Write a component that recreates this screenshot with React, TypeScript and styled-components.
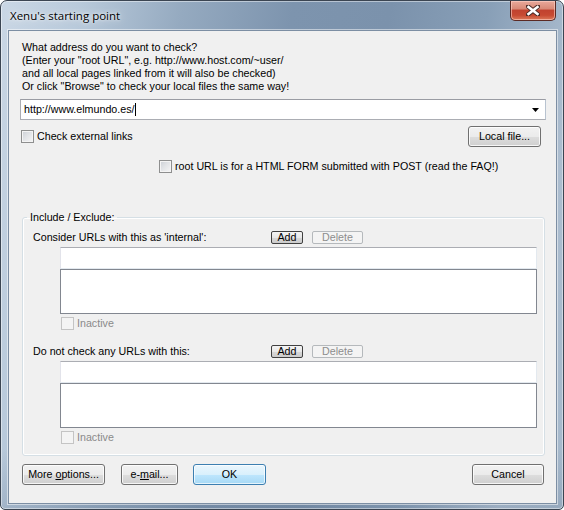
import styled, { createGlobalStyle } from 'styled-components'

const GlobalStyle = createGlobalStyle`
  html, body {
    margin: 0;
    padding: 0;
    background: #ffffff;
  }
  body {
    font-family: "Liberation Sans", Arial, sans-serif;
    font-size: 10.7px;
    color: #000;
  }
`

const Window = styled.div`
  width: 564px;
  height: 510px;
  box-sizing: border-box;
  border: 1px solid #3b4552;
  border-radius: 7px 7px 5px 5px;
  padding: 0 6px 5px 7px;
  display: flex;
  flex-direction: column;
  background:
    linear-gradient(180deg, rgba(255,255,255,0) 0%, rgba(255,255,255,0) 88%, rgba(60,80,110,0.15) 100%),
    linear-gradient(100deg, #cad7e5 0%, #b9cadb 12%, #95aac0 28%, #7d94ae 45%, #7b92ac 60%, #889fb7 75%, #acbdcf 90%, #a5b8cb 100%);
  box-shadow: inset 0 0 0 1px rgba(255,255,255,0.45);
`

const TitleBar = styled.div`
  height: 29px;
  display: flex;
  align-items: flex-start;
  padding-left: 2px;
`

const Title = styled.div`
  font-family: "Open Sans", "Noto Sans", sans-serif;
  font-size: 11.5px;
  line-height: 16px;
  margin-top: 7px;
  color: #000;
  text-shadow: 0 0 8px rgba(255,255,255,0.9), 0 0 3px rgba(255,255,255,0.9);
  flex: 1;
`

const CloseButton = styled.div`
  width: 46px;
  height: 20px;
  box-sizing: border-box;
  margin-right: 1px;
  border: 1px solid #5b2a24;
  border-top: none;
  border-radius: 0 0 5px 5px;
  background: linear-gradient(180deg, #e9a99b 0%, #d98a78 40%, #c1432f 50%, #c74a32 75%, #dc7a5a 100%);
  box-shadow: inset 0 0 0 1px rgba(255,210,200,0.6);
  display: flex;
  align-items: center;
  justify-content: center;
`

const Client = styled.div`
  flex: 1;
  border: 1px solid #7c8ea3;
  box-shadow: 0 0 0 1px rgba(255,255,255,0.5);
  background: #f0f0f0;
  padding: 10px 10px 0 11px;
  display: flex;
  flex-direction: column;
`

const Prompt = styled.div`
  margin-left: 2px;
  line-height: 13px;
`

const Combo = styled.div`
  margin-top: 6px;
  height: 21px;
  box-sizing: border-box;
  border: 1px solid #abadb3;
  border-top-color: #9a9ca3;
  border-right-color: #b8c3d0;
  background: #fff;
  display: flex;
  align-items: center;
  padding: 0 6px 0 3px;
`

const ComboText = styled.span`
  flex: 1;
  line-height: 13px;
`

const Caret = styled.span`
  display: inline-block;
  width: 1px;
  height: 13px;
  background: #000;
  vertical-align: top;
`

const Row = styled.div<{ $top: number; $indent?: number }>`
  display: flex;
  align-items: center;
  margin-top: ${p => p.$top}px;
  padding-left: ${p => p.$indent ?? 0}px;
`

const CheckLabel = styled.label<{ $disabled?: boolean }>`
  display: flex;
  align-items: center;
  gap: 3px;
  line-height: 13px;
  color: ${p => (p.$disabled ? '#8a8a8a' : '#000')};
  flex: 1;
`

const Box = styled.span<{ $disabled?: boolean }>`
  width: 13px;
  height: 13px;
  box-sizing: border-box;
  border: 1px solid ${p => (p.$disabled ? '#c4c4c4' : '#8e8f8f')};
  background: ${p =>
    p.$disabled
      ? '#f4f4f4'
      : 'linear-gradient(135deg, #cbcfd5 0%, #e1e3e6 45%, #f6f6f6 100%)'};
  box-shadow: inset 0 0 0 1px #f4f4f4;
  flex: none;
`

const Button = styled.div<{ $w: number; $default?: boolean }>`
  width: ${p => p.$w}px;
  height: 21px;
  box-sizing: border-box;
  border: 1px solid ${p => (p.$default ? '#3c7fb1' : '#707070')};
  border-radius: 3px;
  background: ${p =>
    p.$default
      ? 'linear-gradient(180deg, #eaf6fd 0%, #d9f0fc 50%, #bee6fd 51%, #a7d9f5 100%)'
      : 'linear-gradient(180deg, #f2f2f2 0%, #ebebeb 50%, #dddddd 51%, #cfcfcf 100%)'};
  box-shadow: inset 0 0 0 1px ${p => (p.$default ? 'rgba(255,255,255,0.7)' : 'rgba(255,255,255,0.8)')};
  display: flex;
  align-items: center;
  justify-content: center;
  flex: none;
  line-height: 13px;
`

const SmallButton = styled.div<{ $w: number; $disabled?: boolean }>`
  width: ${p => p.$w}px;
  height: 13px;
  box-sizing: border-box;
  border: 1px solid ${p => (p.$disabled ? '#b5b9bc' : '#404040')};
  border-radius: 2px;
  background: ${p =>
    p.$disabled ? '#f4f4f4' : 'linear-gradient(180deg, #f4f4f4 0%, #e8e8e8 50%, #d8d8d8 51%, #cccccc 100%)'};
  color: ${p => (p.$disabled ? '#8d8d8d' : '#000')};
  line-height: 11px;
  display: flex;
  align-items: center;
  justify-content: center;
  flex: none;
`

const Group = styled.fieldset`
  margin: 38px 1px 0 2px;
  padding: 0 0 11px 0;
  border: 1px solid #d5dfe5;
  border-radius: 3px;
  box-shadow: inset 0 0 0 1px #ffffff;
  min-width: 0;
`

const Legend = styled.legend`
  margin-left: 4px;
  padding: 0 3px;
  line-height: 13px;
`

const Section = styled.div<{ $top: number }>`
  margin-top: ${p => p.$top}px;
  display: flex;
  flex-direction: column;
`

const SectionHead = styled.div`
  display: flex;
  align-items: center;
  height: 13px;
  padding-left: 10px;
`

const SectionLabel = styled.span`
  width: 238px;
  line-height: 13px;
`

const ButtonGap = styled.span`
  width: 9px;
`

const Field = styled.div`
  margin: 3px 0 0 37px;
  width: 477px;
  height: 22px;
  box-sizing: border-box;
  border: 1px solid #e3e9ef;
  border-top-color: #abadb3;
  border-left-color: #e2e3ea;
  background: #fff;
`

const ListBox = styled.div`
  margin-left: 37px;
  width: 477px;
  height: 45px;
  box-sizing: border-box;
  border: 1px solid #828790;
  background: #fff;
`

const InactiveRow = styled.div`
  margin: 3px 0 0 38px;
  display: flex;
`

const Footer = styled.div`
  display: flex;
  align-items: center;
  margin: 8px 2px 0 2px;
`

const FooterGap = styled.span<{ $w: number }>`
  width: ${p => p.$w}px;
  flex: none;
`

const Spacer = styled.span`
  flex: 1;
`

const Arrow = () => (
  <svg width="7" height="4" viewBox="0 0 7 4">
    <path d="M0 0 H7 L3.5 4 Z" fill="#000" />
  </svg>
)

const CloseGlyph = () => (
  <svg width="14" height="11" viewBox="0 0 14 11">
    <path d="M2 1.5 L12 9.5 M12 1.5 L2 9.5" stroke="#4a2a26" strokeWidth="4.4" strokeLinecap="round" />
    <path d="M2.5 2 L11.5 9 M11.5 2 L2.5 9" stroke="#ffffff" strokeWidth="2.6" strokeLinecap="square" />
  </svg>
)

const ListSection = ({ label, top }: { label: string; top: number }) => (
  <Section $top={top}>
    <SectionHead>
      <SectionLabel>{label}</SectionLabel>
      <SmallButton $w={32}>Add</SmallButton>
      <ButtonGap />
      <SmallButton $w={51} $disabled>
        Delete
      </SmallButton>
    </SectionHead>
    <Field />
    <ListBox />
    <InactiveRow>
      <CheckLabel $disabled>
        <Box $disabled />
        Inactive
      </CheckLabel>
    </InactiveRow>
  </Section>
)

export default function App() {
  return (
    <>
      <GlobalStyle />
      <Window>
        <TitleBar>
          <Title>Xenu's starting point</Title>
          <CloseButton>
            <CloseGlyph />
          </CloseButton>
        </TitleBar>
        <Client>
          <Prompt>
            What address do you want to check?
            <br />
            (Enter your "root URL", e.g. http://www.host.com/~user/
            <br />
            and all local pages linked from it will also be checked)
            <br />
            Or click "Browse" to check your local files the same way!
          </Prompt>
          <Combo>
            <ComboText>
              http://www.elmundo.es/
              <Caret />
            </ComboText>
            <Arrow />
          </Combo>
          <Row $top={6} $indent={1}>
            <CheckLabel>
              <Box />
              Check external links
            </CheckLabel>
            <Button $w={73}>Local file...</Button>
            <FooterGap $w={5} />
          </Row>
          <Row $top={13} $indent={139}>
            <CheckLabel>
              <Box />
              root URL is for a HTML FORM submitted with POST (read the FAQ!)
            </CheckLabel>
          </Row>
          <Group>
            <Legend>Include / Exclude:</Legend>
            <ListSection label="Consider URLs with this as 'internal':" top={7} />
            <ListSection label="Do not check any URLs with this:" top={15} />
          </Group>
          <Footer>
            <Button $w={83}>
              <span>
                More <u>o</u>ptions...
              </span>
            </Button>
            <FooterGap $w={16} />
            <Button $w={57}>
              <span>
                e-<u>m</u>ail...
              </span>
            </Button>
            <FooterGap $w={15} />
            <Button $w={73} $default>
              OK
            </Button>
            <Spacer />
            <Button $w={72}>Cancel</Button>
          </Footer>
        </Client>
      </Window>
    </>
  )
}
